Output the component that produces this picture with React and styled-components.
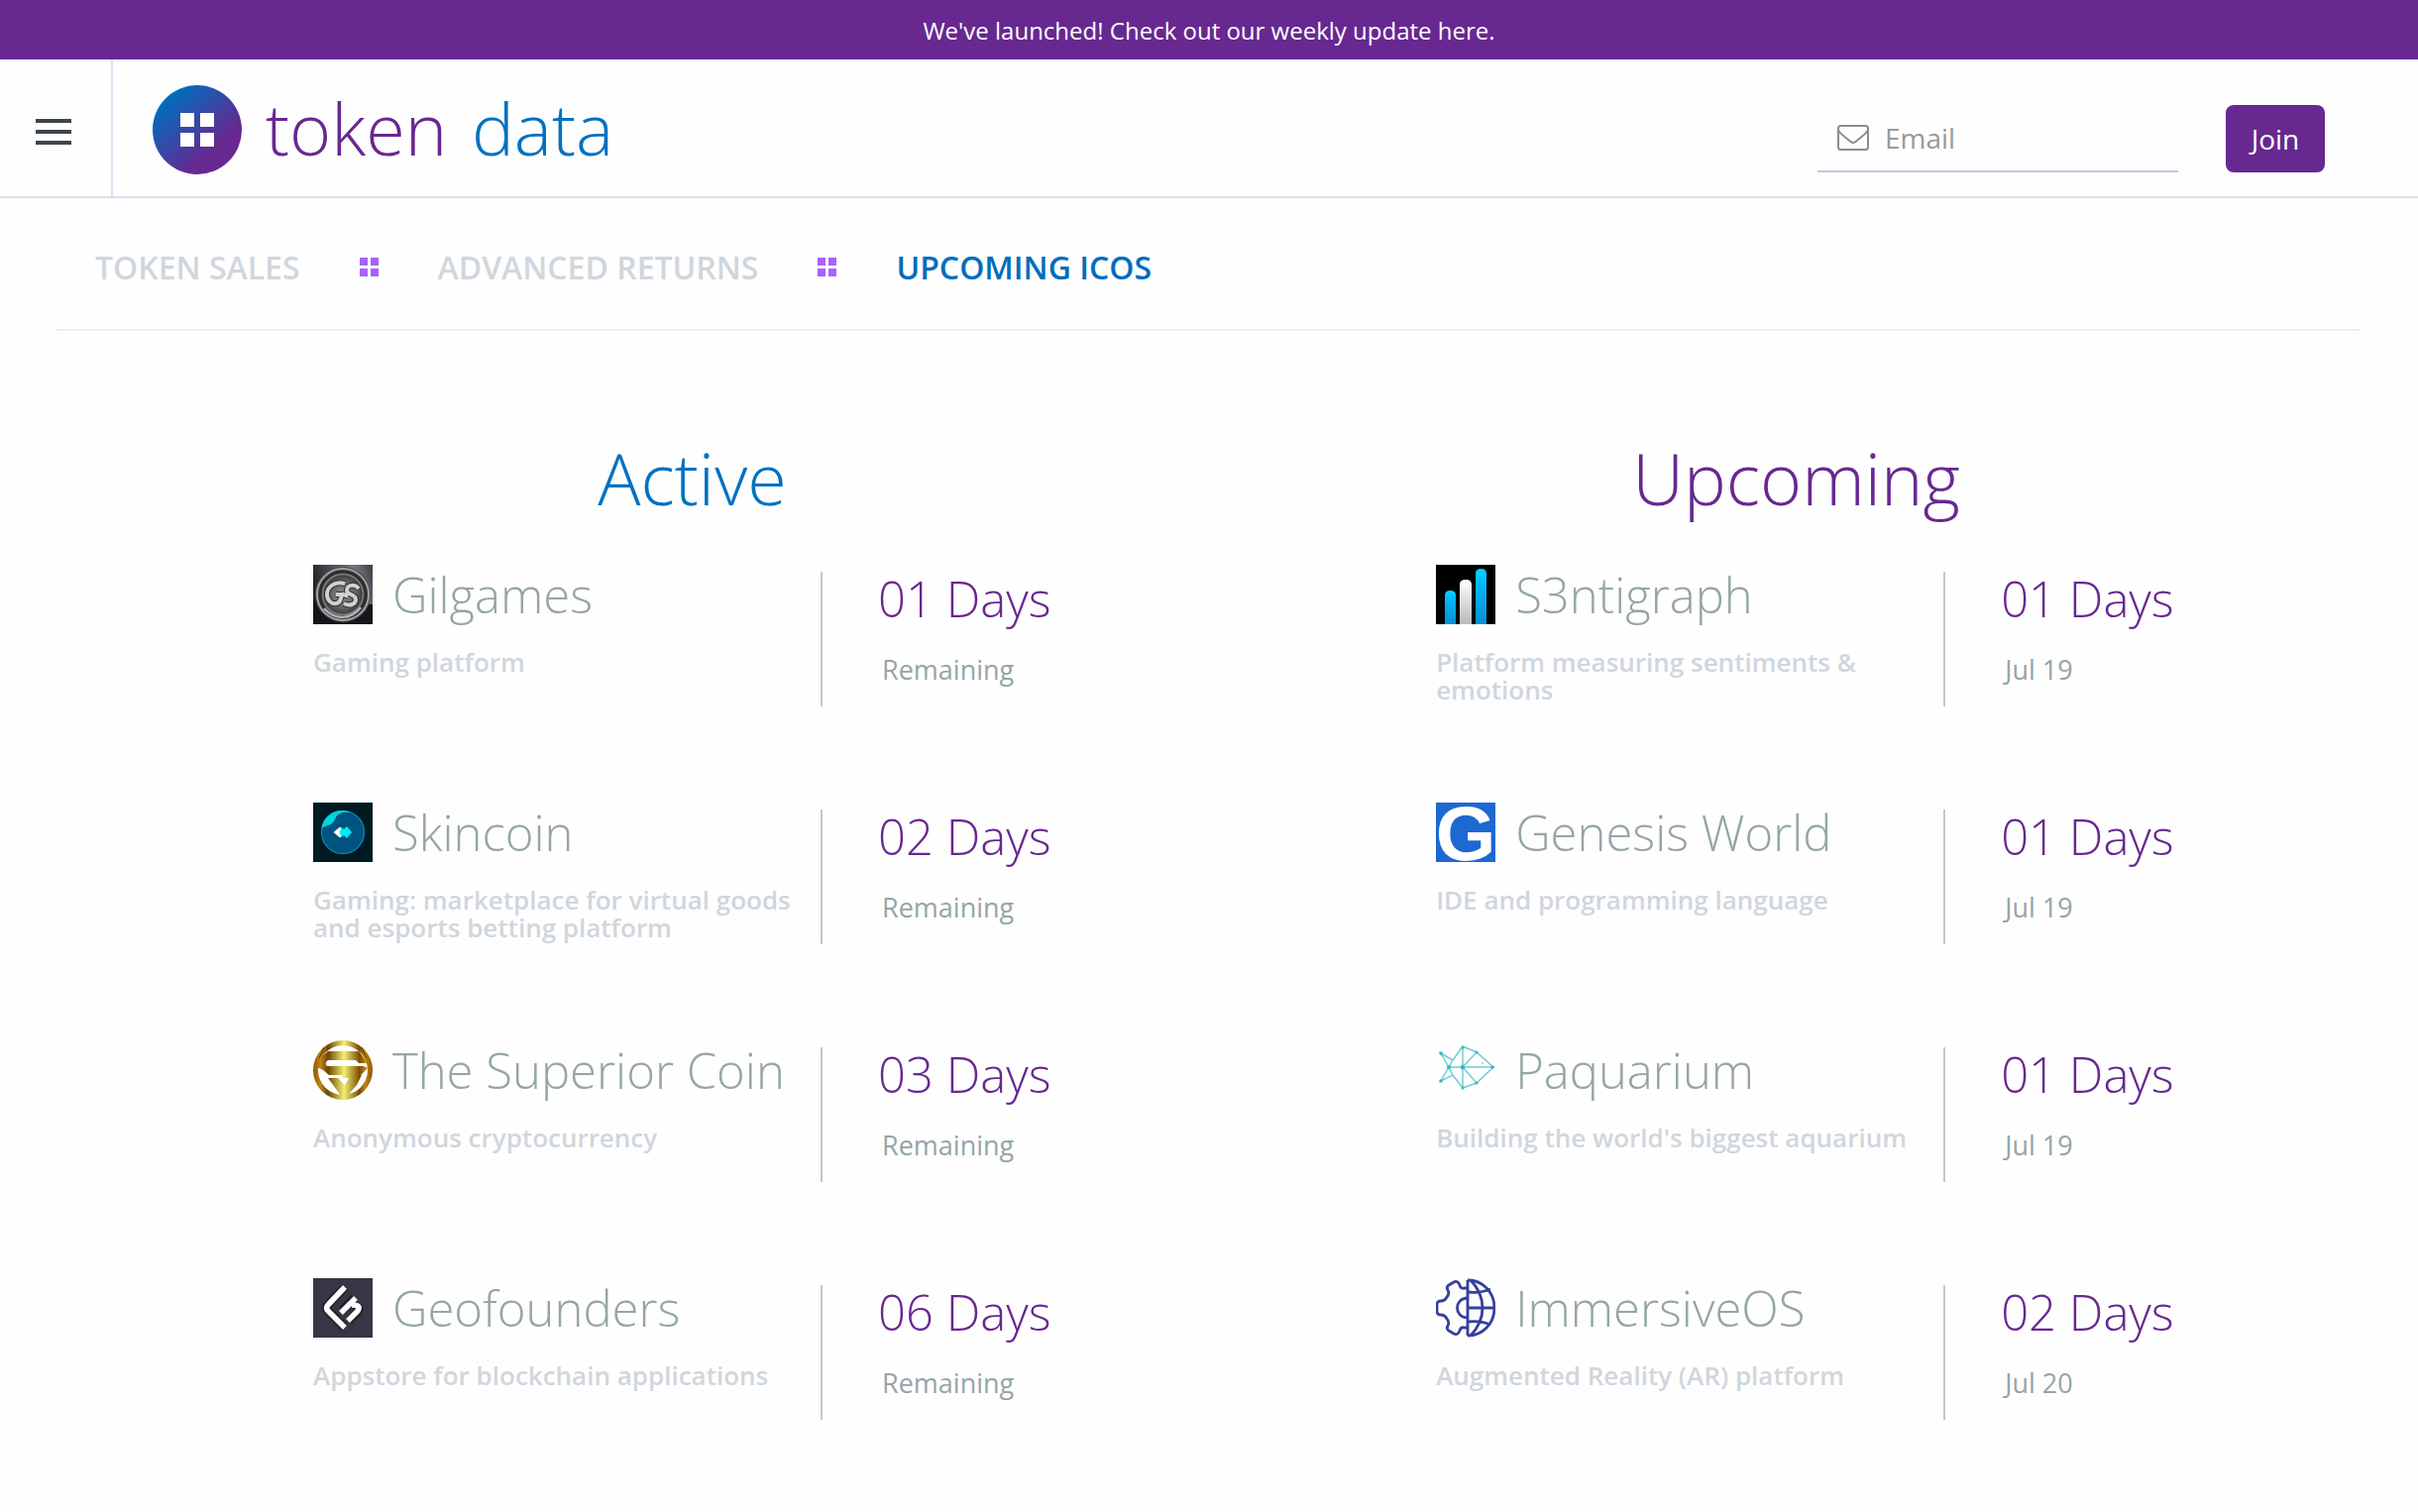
import React from "react";
import styled, { createGlobalStyle } from "styled-components";

const GlobalStyle = createGlobalStyle`
    * {
        box-sizing: border-box;
    }

    body {
        margin: 0;
        background: #fefefe;
        font-family: "Open Sans", "Noto Sans", sans-serif;
    }

    h1, h2, h3, p, ul {
        margin: 0;
        padding: 0;
        font-weight: 400;
    }
`

const Banner = styled.a`
    display: block;
    height: 60px;
    line-height: 62px;
    background: #672890;
    color: #fff;
    font-size: 24px;
    text-align: center;
    text-decoration: none;
`

const Header = styled.header`
    display: flex;
    align-items: stretch;
    height: 140px;
    border-bottom: 2px solid #dde0ef;
`

const MenuButton = styled.button`
    display: flex;
    flex-direction: column;
    align-items: center;
    justify-content: center;
    gap: 7px;
    width: 114px;
    padding: 8px 4px 0 0;
    border: 0;
    border-right: 2px solid #dde0ef;
    background: none;
`

const MenuBar = styled.span`
    width: 36px;
    height: 4px;
    background: #3d464d;
`

const Logo = styled.a`
    display: flex;
    align-items: center;
    gap: 24px;
    margin-left: 40px;
    padding-top: 4px;
    text-decoration: none;
`

const LogoText = styled.span`
    padding-bottom: 4px;
    font-size: 72px;
    font-weight: 300;
    line-height: 96px;
    white-space: pre;
    color: #672890;
`

const LogoAccent = styled.span`
    margin-left: 6px;
    color: #0071c1;
`

const JoinForm = styled.form`
    display: flex;
    align-items: flex-end;
    gap: 48px;
    margin-left: auto;
    padding: 0 94px 24px 0;
`

const EmailField = styled.label`
    display: flex;
    align-items: center;
    gap: 16px;
    width: 364px;
    height: 68px;
    padding-left: 20px;
    border-bottom: 2px solid #c2c7dc;
`

const EmailInput = styled.input`
    flex: 1;
    min-width: 0;
    padding: 0;
    border: 0;
    outline: 0;
    background: none;
    font: 400 28px "Open Sans", sans-serif;

    &::placeholder {
        color: #999;
    }
`

const JoinButton = styled.button`
    width: 100px;
    height: 68px;
    padding: 0;
    border: 0;
    border-radius: 8px;
    background: #672890;
    color: #fff;
    font: 400 28px "Open Sans", sans-serif;
`

const Tabs = styled.nav`
    display: flex;
    align-items: center;
    gap: 60px;
    height: 134px;
    margin: 0 58px 0 56px;
    padding: 6px 0 0 40px;
    border-bottom: 2px solid #eee;
`

const Tab = styled.a`
    color: ${({ $active }) => ($active ? "#006dbd" : "#d0d6dd")};
    font-size: 32px;
    font-weight: 600;
    text-decoration: none;
    text-transform: uppercase;
`

const Board = styled.main`
    display: grid;
    grid-template-columns: 20fr 19fr;
    column-gap: 368px;
    padding: 94px 264px 0 316px;
`

const ColumnTitle = styled.h1`
    font-size: 72px;
    font-weight: 300;
    line-height: 108px;
    text-align: center;
    color: ${({ $color }) => $color};
`

const List = styled.ul`
    padding-top: 34px;
    list-style: none;
`

const Sale = styled.li`
    display: grid;
    grid-template-columns: minmax(0, 512px) minmax(0, 1fr);
    min-height: 240px;
`

const SaleInfo = styled.div`
    padding-right: 14px;
`

const SaleHeading = styled.div`
    display: flex;
    align-items: center;
    gap: 20px;
    height: 60px;
`

const SaleName = styled.h2`
    font-size: 49px;
    font-weight: 300;
    line-height: 60px;
    white-space: nowrap;
    color: #95a5a6;
`

const SaleText = styled.p`
    margin-top: 24px;
    font-size: 26px;
    font-weight: 600;
    line-height: 28px;
    color: #d0d6dd;
`

const SaleDate = styled.div`
    align-self: start;
    height: 136px;
    margin-top: 7px;
    padding-left: 56px;
    border-left: 2px solid #c4c6c8;
`

const Days = styled.h3`
    font-size: 49px;
    font-weight: 300;
    line-height: 54px;
    white-space: nowrap;
    color: #672890;
`

const Note = styled.p`
    margin: 26px 0 0 4px;
    font-size: 27px;
    line-height: 38px;
    color: #95a5a6;
`

const BrandMark = () => (
    <svg width="90" height="90" viewBox="0 0 90 90" aria-hidden="true">
        <defs>
            <linearGradient id="brand" x1="0.1" y1="0.15" x2="0.8" y2="0.9">
                <stop offset="0.05" stopColor="#006dbd" />
                <stop offset="0.8" stopColor="#672890" />
            </linearGradient>
        </defs>
        <circle cx="45" cy="45" r="45" fill="url(#brand)" />
        <path d="M28 28h14v14H28zM48 28h14v14H48zM28 48h14v14H28zM48 48h14v14H48z" fill="#fff" />
    </svg>
)

const Dots = () => (
    <svg width="19" height="20" viewBox="0 0 19 20" aria-hidden="true">
        <path d="M0 1h8v8H0zM11 1h8v8h-8zM0 12h8v8H0zM11 12h8v8h-8z" fill="#a862ff" />
    </svg>
)

const Envelope = () => (
    <svg width="32" height="26" viewBox="0 0 32 26" fill="none" stroke="#8c8c8c" strokeWidth="2" aria-hidden="true">
        <rect x="1" y="1" width="30" height="24" rx="2.5" />
        <path d="M1 5c1 3 4 5 9 9 3 2.500 4 4 6 4s3-1.500 6-4c5-4 8-6 9-9" />
    </svg>
)

const GilgamesIcon = () => (
    <svg width="60" height="60" viewBox="0 0 60 60" aria-hidden="true">
        <defs>
            <linearGradient id="steel" x1="0" y1="0.3" x2="1" y2="0">
                <stop offset="0" stopColor="#202228" />
                <stop offset="0.7" stopColor="#777781" />
                <stop offset="1" stopColor="#3c3d45" />
            </linearGradient>
            <radialGradient id="disc">
                <stop offset="0" stopColor="#909090" />
                <stop offset="0.55" stopColor="#5a5a5c" />
                <stop offset="0.8" stopColor="#28282b" />
                <stop offset="1" stopColor="#4c4c50" />
            </radialGradient>
        </defs>
        <rect width="60" height="60" fill="url(#steel)" />
        <path d="M0 36l60 4v20H0z" fill="#15161b" />
        <circle cx="30" cy="30" r="28" fill="url(#disc)" />
        <circle cx="30" cy="30" r="26" fill="none" stroke="#a2a2a4" strokeWidth="2" />
        <circle cx="30" cy="30" r="20.500" fill="none" stroke="#77777a" strokeWidth="2" />
        <path d="M11 44c11 12 27 12 37-1" fill="none" stroke="#b4b4b4" strokeWidth="2.500" />
        <path d="M32 19c-11-3-18 4-18 11 0 6 5 10 9 9 4 0 5-4 6-9h-6M46 24c-4-5-12-4-12 2 0 5 9 3 9 9 0 5-6 7-12 4M29 29l6 3" fill="none" stroke="#303034" strokeWidth="6" />
        <path d="M32 19c-11-3-18 4-18 11 0 6 5 10 9 9 4 0 5-4 6-9h-6M46 24c-4-5-12-4-12 2 0 5 9 3 9 9 0 5-6 7-12 4M29 29l6 3" fill="none" stroke="#d0d0d0" strokeWidth="4" />
    </svg>
)

const SkincoinIcon = () => (
    <svg width="60" height="60" viewBox="0 0 60 60" aria-hidden="true">
        <rect width="60" height="60" fill="#001923" />
        <circle cx="30" cy="30" r="21.500" fill="#005281" stroke="#087ea1" strokeWidth="1.500" />
        <path d="M8.500 26C10 15 19 8 29 8c4 0 7 1 9 2-8-1-13 1-15 5-2 5-4 7-8 8-3 1-5 2-6.500 3z" fill="#00d4df" />
        <path d="M27 24.500l4 4v3l-4 4-6.500-5.500z" fill="#fff" />
        <path d="M34 24l5 6-5 6-3-3-2 2-2.500-5 2.500-5 2 2z" fill="#00eaf2" />
    </svg>
)

const SuperiorIcon = () => (
    <svg width="60" height="60" viewBox="0 0 60 60" aria-hidden="true">
        <defs>
            <linearGradient id="gold" gradientUnits="userSpaceOnUse" x1="0" y1="0" x2="60" y2="0">
                <stop offset="0" stopColor="#8a5600" />
                <stop offset="0.12" stopColor="#c0851a" />
                <stop offset="0.25" stopColor="#6e4500" />
                <stop offset="0.52" stopColor="#f4f070" />
                <stop offset="0.78" stopColor="#7a4c00" />
                <stop offset="0.88" stopColor="#c0851a" />
                <stop offset="1" stopColor="#8a5600" />
            </linearGradient>
        </defs>
        <g fill="url(#gold)">
            <path fillRule="evenodd" d="M30 0a30 30 0 0 1 0 60 30 30 0 0 1 0-60zM30 5a25 25 0 0 0 0 50 25 25 0 0 0 0-50z" />
            <path d="M15 11h31l4 5 5 7h-9l-3-3H15q-4 3-1 6h37l4 2-7 7H16l-6-5-6-3q0-7 7-13z" />
            <path d="M15 38h10l7 7 4-7h-6v-3h19l-5 10-13 15z" />
        </g>
        <path d="M11 7l-5 11M49 7l5 11" stroke="#5c3a00" strokeWidth="1" />
    </svg>
)

const GeofoundersIcon = () => (
    <svg width="60" height="60" viewBox="0 0 60 60" aria-hidden="true">
        <rect width="60" height="60" fill="#363645" />
        <g fill="none" strokeLinejoin="round">
            <path d="M32 9L15 27q-3 3 0 6l17 17M42 20L29 33M39 29q10-1 6 5l-9 9" stroke="#20202a" strokeWidth="9" />
            <path d="M32 9L15 27q-3 3 0 6l17 17M43 20L28 35M39 27q10 0 6 6l-10 10" stroke="#fff" strokeWidth="5.500" />
        </g>
    </svg>
)

const SentigraphIcon = () => (
    <svg width="60" height="60" viewBox="0 0 60 60" aria-hidden="true">
        <defs>
            <linearGradient id="blueBar" x1="0" y1="0" x2="0" y2="1">
                <stop offset="0" stopColor="#00d8ff" />
                <stop offset="0.25" stopColor="#00b9fa" />
                <stop offset="1" stopColor="#078fd0" />
            </linearGradient>
            <linearGradient id="whiteBar" x1="0" y1="0" x2="0" y2="1">
                <stop offset="0" stopColor="#fff" />
                <stop offset="1" stopColor="#b9b9b9" />
            </linearGradient>
        </defs>
        <rect width="60" height="60" fill="#000" />
        <path d="M9 60V31q0-5 5.500-5t5.500 5v29z" fill="url(#blueBar)" />
        <path d="M24 60V20q0-5 6-5t6 5v40z" fill="url(#whiteBar)" />
        <path d="M40 60V9q0-5 5.500-5t5.500 5v51z" fill="url(#blueBar)" />
    </svg>
)

const GenesisIcon = () => (
    <svg width="60" height="60" viewBox="0 0 60 60" overflow="visible" aria-hidden="true">
        <rect width="60" height="60" fill="#1e68d2" />
        <text x="30" y="58" fill="#fff" fontFamily="Liberation Sans, Arial, sans-serif" fontSize="78" fontWeight="700" textAnchor="middle">G</text>
    </svg>
)

const PaquariumIcon = () => (
    <svg width="60" height="60" viewBox="0 0 60 60" aria-hidden="true">
        <path d="M5 13l12 7L27 6l14 6 17 15-17 16-14 5-10-13-12 6 8-14zM17 20l-4 7 4 8M27 6v42M13 27h45M27 27l14-15M27 27l14 16" fill="none" stroke="#72cdd2" strokeWidth="1.500" />
        <g fill="#35b7bf">
            <circle cx="5" cy="13" r="1.800" />
            <circle cx="5" cy="41" r="1.800" />
            <circle cx="13" cy="27" r="2" />
            <circle cx="27" cy="27" r="2.200" />
            <circle cx="27" cy="7" r="1.500" />
            <circle cx="27" cy="48" r="1.500" />
            <circle cx="41" cy="12" r="1.500" />
            <circle cx="41" cy="43" r="1.500" />
            <circle cx="57" cy="27" r="1.800" />
            <circle cx="47" cy="23" r="0.800" />
        </g>
    </svg>
)

const ImmersiveIcon = () => (
    <svg width="60" height="60" viewBox="0 0 60 60" fill="none" stroke="#35409c" strokeWidth="2.800" strokeLinejoin="round" aria-hidden="true">
        <path d="M32 2v56M32 2c15 0 27 12 27 28S47 58 32 58" />
        <path d="M35 2c16 17 16 39 0 56M32 14c9 1 16 0 23-3M32 30h27M32 44c9-1 16 0 23 3" />
        <path d="M32 10h-3q-4 1-5-3-2-5-6-3l-5 3q-3 2-1 5 2 4-1 7-2 4-6 4-4 0-4 4v6q0 4 4 4t6 4q3 3 1 7-2 3 1 5l5 3q4 2 6-3 1-4 5-3h3" />
        <path d="M32 20c-14 0-14 20 0 20" />
    </svg>
)

const active = [
    { name: "Gilgames", text: "Gaming platform", days: "01", note: "Remaining", Icon: GilgamesIcon },
    { name: "Skincoin", text: "Gaming: marketplace for virtual goods and esports betting platform", days: "02", note: "Remaining", Icon: SkincoinIcon },
    { name: "The Superior Coin", text: "Anonymous cryptocurrency", days: "03", note: "Remaining", Icon: SuperiorIcon },
    { name: "Geofounders", text: "Appstore for blockchain applications", days: "06", note: "Remaining", Icon: GeofoundersIcon },
]

const upcoming = [
    { name: "S3ntigraph", text: "Platform measuring sentiments & emotions", days: "01", note: "Jul 19", Icon: SentigraphIcon },
    { name: "Genesis World", text: "IDE and programming language", days: "01", note: "Jul 19", Icon: GenesisIcon },
    { name: "Paquarium", text: "Building the world's biggest aquarium", days: "01", note: "Jul 19", Icon: PaquariumIcon },
    { name: "ImmersiveOS", text: "Augmented Reality (AR) platform", days: "02", note: "Jul 20", Icon: ImmersiveIcon },
]

const SaleItem = ({ sale }) => {
    const { Icon } = sale
    return (
        <Sale>
            <SaleInfo>
                <SaleHeading>
                    <Icon />
                    <SaleName>{sale.name}</SaleName>
                </SaleHeading>
                <SaleText>{sale.text}</SaleText>
            </SaleInfo>
            <SaleDate>
                <Days>{`${sale.days} Days`}</Days>
                <Note>{sale.note}</Note>
            </SaleDate>
        </Sale>
    )
}

const SaleColumn = ({ title, color, sales }) => (
    <section>
        <ColumnTitle $color={color}>{title}</ColumnTitle>
        <List>
            {sales.map((sale) => <SaleItem key={sale.name} sale={sale} />)}
        </List>
    </section>
)

const App = () => {
    return (
        <>
            <GlobalStyle />
            <Banner href="#update">We've launched! Check out our weekly update here.</Banner>
            <Header>
                <MenuButton type="button" aria-label="Menu">
                    <MenuBar />
                    <MenuBar />
                    <MenuBar />
                </MenuButton>
                <Logo href="#home">
                    <BrandMark />
                    <LogoText>token <LogoAccent>data</LogoAccent></LogoText>
                </Logo>
                <JoinForm onSubmit={(e) => e.preventDefault()}>
                    <EmailField>
                        <Envelope />
                        <EmailInput type="email" placeholder="Email" aria-label="Email" />
                    </EmailField>
                    <JoinButton type="submit">Join</JoinButton>
                </JoinForm>
            </Header>
            <Tabs>
                <Tab href="#sales">Token Sales</Tab>
                <Dots />
                <Tab href="#returns">Advanced Returns</Tab>
                <Dots />
                <Tab href="#upcoming" $active>Upcoming ICOs</Tab>
            </Tabs>
            <Board>
                <SaleColumn title="Active" color="#0071c1" sales={active} />
                <SaleColumn title="Upcoming" color="#672890" sales={upcoming} />
            </Board>
        </>
    )
}

export default App;
